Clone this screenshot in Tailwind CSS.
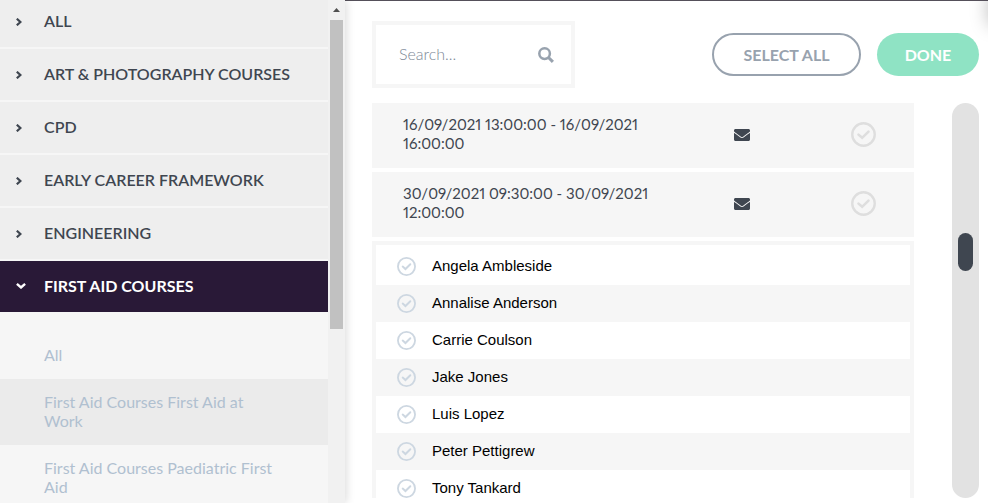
<!DOCTYPE html>
<html lang="en">
<head>
<meta charset="utf-8">
<title>Courses</title>
<script src="https://cdn.jsdelivr.net/npm/@tailwindcss/browser@4"></script>
</head>
<body class="bg-white font-['Lato','Liberation_Sans',sans-serif] text-base leading-[19px] text-[#3f4650]">
<svg class="hidden">
  <symbol id="right" viewBox="0 0 6 8"><path d="M.8 .7 4.4 4 .8 7.3" fill="none" stroke="currentColor" stroke-width="2.2"/></symbol>
  <symbol id="down" viewBox="0 0 10 6"><path d="M.9 .9 5 4.5 9.1 .9" fill="none" stroke="currentColor" stroke-width="2.4"/></symbol>
  <symbol id="check" viewBox="0 0 24 24"><circle cx="12" cy="12" r="10.8" fill="none" stroke="currentColor" stroke-width="2.3"/><path d="M7.2 12.1 10.7 15.2 16.8 9.2" fill="none" stroke="currentColor" stroke-width="2.5" stroke-linecap="round"/></symbol>
  <symbol id="mail" viewBox="0 0 512 384"><path fill="currentColor" d="M502 127c4-3 10 0 10 5v204c0 26-21 48-48 48H48c-27 0-48-22-48-48V132c0-5 6-8 10-5 22 17 52 40 155 114 21 16 57 48 91 48s71-33 91-48c103-74 133-97 155-114zM256 256c23 0 57-29 74-42 134-97 144-105 175-129 6-5 7-11 7-18V48c0-27-21-48-48-48H48C21 0 0 21 0 48v19c0 7 3 14 9 18 31 24 41 32 173 129 17 13 51 42 74 42z"/></symbol>
</svg>
<div class="flex h-screen overflow-hidden">
  <aside class="z-10 flex w-[345px] shrink-0 overflow-hidden bg-[#f6f6f6] shadow-[2px_0_8px_rgba(0,0,0,0.13)]">
    <nav class="-mt-1 min-w-0 flex-1" aria-label="Course categories">
      <ul class="font-semibold">
        <li class="border-b-2 border-[#f6f6f6] bg-[#eee]"><button class="flex h-[51px] w-full items-center pb-0.5 pl-4 text-left"><svg class="mt-0.5 mr-[22px] h-2 w-[6px]"><use href="#right"/></svg>ALL</button></li>
        <li class="border-b-2 border-[#f6f6f6] bg-[#eee]"><button class="flex h-[51px] w-full items-center pb-0.5 pl-4 text-left"><svg class="mt-0.5 mr-[22px] h-2 w-[6px]"><use href="#right"/></svg>ART &amp; PHOTOGRAPHY COURSES</button></li>
        <li class="border-b-2 border-[#f6f6f6] bg-[#eee]"><button class="flex h-[51px] w-full items-center pb-0.5 pl-4 text-left"><svg class="mt-0.5 mr-[22px] h-2 w-[6px]"><use href="#right"/></svg>CPD</button></li>
        <li class="border-b-2 border-[#f6f6f6] bg-[#eee]"><button class="flex h-[51px] w-full items-center pb-0.5 pl-4 text-left"><svg class="mt-0.5 mr-[22px] h-2 w-[6px]"><use href="#right"/></svg>EARLY CAREER FRAMEWORK</button></li>
        <li class="border-b-2 border-[#f6f6f6] bg-[#eee]"><button class="flex h-[51px] w-full items-center pb-0.5 pl-4 text-left"><svg class="mt-0.5 mr-[22px] h-2 w-[6px]"><use href="#right"/></svg>ENGINEERING</button></li>
        <li class="bg-[#291937] text-white"><button class="flex h-[51px] w-full items-center pb-0.5 pl-4 text-left font-bold" aria-expanded="true"><svg class="mr-[18px] h-[6px] w-[10px]"><use href="#down"/></svg>FIRST AID COURSES</button></li>
      </ul>
      <ul class="pt-5 text-[#b0c0d0]">
        <li><a href="#" class="block px-11 pt-[13px] pb-[15px]">All</a></li>
        <li class="bg-[#ebebeb]"><a href="#" class="block px-11 pt-[13px] pb-[15px]">First Aid Courses First Aid at Work</a></li>
        <li><a href="#" class="block px-11 pt-[13px] pb-[15px]">First Aid Courses Paediatric First Aid</a></li>
      </ul>
    </nav>
    <div class="flex w-[17px] flex-col items-center bg-[#f1f1f1]">
      <svg class="h-5 w-[17px] shrink-0" viewBox="0 0 17 20"><path d="M5 12h7L8.5 8z" fill="#505050"/></svg>
      <div class="h-[309px] w-[13px] bg-[#c1c1c1]"></div>
    </div>
  </aside>

  <main class="relative flex min-w-0 flex-1 flex-col overflow-hidden border-t border-[#55505a] pt-5 pr-[9px] pb-[5px] pl-[27px]">
    <div class="absolute -top-2 -right-5 h-8 w-5 shadow-[0_0_18px_rgba(0,0,0,0.25)]"></div>
    <div class="flex items-center gap-4">
      <label class="flex h-[67px] w-[203px] items-center justify-between border-4 border-[#f6f6f6] pr-[17px] pl-[23px]">
        <input type="search" aria-label="Search" placeholder="Search..." class="w-[110px] bg-transparent pb-0.5 font-light outline-none placeholder:text-[#7c8896]">
        <svg class="size-4 text-[#98a2ae]" viewBox="0 0 16 16" fill="none" stroke="currentColor"><circle cx="6.6" cy="6.6" r="5.3" stroke-width="2.5"/><path d="m10.5 10.5 4.4 4.4" stroke-width="3"/></svg>
      </label>
      <button class="ml-auto h-[43px] w-[149px] rounded-full border-2 border-[#98a2ae] font-bold text-[#98a2ae]">SELECT ALL</button>
      <button class="h-[43px] w-[102px] rounded-full bg-[#8fe3c4] font-bold text-white">DONE</button>
    </div>
    <div class="mt-[15px] flex min-h-0 flex-1 gap-[38px]">
      <div class="flex min-w-0 flex-1 flex-col gap-1 overflow-hidden">
        <section class="flex h-[65px] shrink-0 items-center bg-[#f6f6f6] pr-[38px] pb-0.5">
          <p class="w-[54%] pb-0.5 pl-[31px] text-[15px] whitespace-nowrap proportional-nums">16/09/2021 13:00:00 - 16/09/2021<br>16:00:00</p>
          <div class="flex flex-1 justify-center pr-3"><button aria-label="Email"><svg class="h-3 w-4"><use href="#mail"/></svg></button></div>
          <button aria-label="Select session" class="text-[#dedede]"><svg class="size-[25px]"><use href="#check"/></svg></button>
        </section>
        <section class="flex h-[65px] shrink-0 items-center bg-[#f6f6f6] pr-[38px] pb-0.5">
          <p class="w-[54%] pb-0.5 pl-[31px] text-[15px] whitespace-nowrap proportional-nums">30/09/2021 09:30:00 - 30/09/2021<br>12:00:00</p>
          <div class="flex flex-1 justify-center pr-3"><button aria-label="Email"><svg class="h-3 w-4"><use href="#mail"/></svg></button></div>
          <button aria-label="Select session" class="text-[#dedede]"><svg class="size-[25px]"><use href="#check"/></svg></button>
        </section>
        <ul class="min-h-0 flex-1 overflow-hidden border-4 border-b-0 border-[#f6f6f6] pt-[3px] font-['Liberation_Sans',sans-serif] text-[15px] text-black">
          <li class="flex h-[37px] items-center gap-4 pl-[21px]"><button aria-label="Select Angela Ambleside" class="text-[#cdd7e1]"><svg class="size-[19px]"><use href="#check"/></svg></button><span class="pb-0.5">Angela Ambleside</span></li>
          <li class="flex h-[37px] items-center gap-4 bg-[#f6f6f6] pl-[21px]"><button aria-label="Select Annalise Anderson" class="text-[#cdd7e1]"><svg class="size-[19px]"><use href="#check"/></svg></button><span class="pb-0.5">Annalise Anderson</span></li>
          <li class="flex h-[37px] items-center gap-4 pl-[21px]"><button aria-label="Select Carrie Coulson" class="text-[#cdd7e1]"><svg class="size-[19px]"><use href="#check"/></svg></button><span class="pb-0.5">Carrie Coulson</span></li>
          <li class="flex h-[37px] items-center gap-4 bg-[#f6f6f6] pl-[21px]"><button aria-label="Select Jake Jones" class="text-[#cdd7e1]"><svg class="size-[19px]"><use href="#check"/></svg></button><span class="pb-0.5">Jake Jones</span></li>
          <li class="flex h-[37px] items-center gap-4 pl-[21px]"><button aria-label="Select Luis Lopez" class="text-[#cdd7e1]"><svg class="size-[19px]"><use href="#check"/></svg></button><span class="pb-0.5">Luis Lopez</span></li>
          <li class="flex h-[37px] items-center gap-4 bg-[#f6f6f6] pl-[21px]"><button aria-label="Select Peter Pettigrew" class="text-[#cdd7e1]"><svg class="size-[19px]"><use href="#check"/></svg></button><span class="pb-0.5">Peter Pettigrew</span></li>
          <li class="flex h-[37px] items-center gap-4 pl-[21px]"><button aria-label="Select Tony Tankard" class="text-[#cdd7e1]"><svg class="size-[19px]"><use href="#check"/></svg></button><span class="pb-0.5">Tony Tankard</span></li>
        </ul>
      </div>
      <div class="w-[27px] rounded-full bg-[#e2e2e2] px-[6px] pt-[130px]">
        <div class="h-[38px] rounded-full bg-[#3f4650]"></div>
      </div>
    </div>
  </main>
</div>
</body>
</html>
